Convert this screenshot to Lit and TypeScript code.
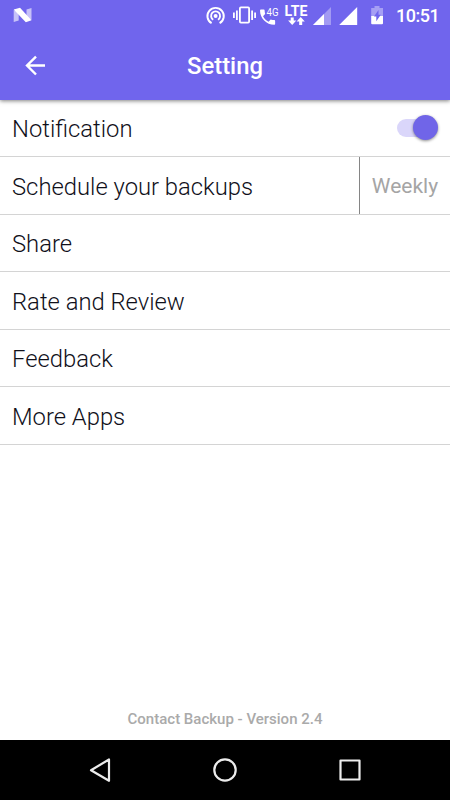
import { LitElement, html, css } from "lit";
import { customElement, property } from "lit/decorators.js";

@customElement("status-bar")
class StatusBar extends LitElement {
  static styles = css`
    :host { display: flex; height: 32px; color: #fff; font-family: Roboto, sans-serif; align-items: center; }
    svg { display: block; height: 32px; flex: none; fill: #fff; }
    .logo { margin-left: 12px; }
    .gap { flex: 1; }
    .time { width: 60px; box-sizing: border-box; padding-left: 6px; font-size: 18px; letter-spacing: -.5px; line-height: 32px; font-weight: 500; white-space: nowrap; }
    .four { font: 400 11.500px Roboto, sans-serif; }
    .lte { font: 700 14px Roboto, sans-serif; }
  `;
  render() {
    return html`
      <svg class="logo" width="22" viewBox="12 0 22 32">
        <path d="M13.700 10v12l5-1.500V12zM26.500 17.500V9.500l5-1.500v12z" opacity=".6"/>
        <path d="M13.700 9.500 20 7.700 31.500 20.200 25.800 22.300z"/>
      </svg>
      <div class="gap"></div>
      <svg width="26" viewBox="204 0 26 32">
        <g fill="none" stroke="#fff" stroke-width="1.9">
          <path d="M211.600 23.200a8.200 8.200 0 1 1 8 0"/>
          <path d="M213.200 19.700a4.500 4.500 0 1 1 4.800 0"/>
        </g>
        <circle cx="215.600" cy="16" r="2"/>
      </svg>
      <svg width="28" viewBox="230 0 28 32">
        <rect x="239.900" y="7.400" width="9.200" height="15.200" rx="1" fill="none" stroke="#fff" stroke-width="1.800"/>
        <path d="M233 12.500h1.800v5.500H233zM236 10.500h1.800v9.500H236zM251.200 10.500h1.800v9.500h-1.800zM254.200 12.500h1.800v5.500h-1.800z"/>
      </svg>
      <svg width="24" viewBox="258 0 24 32">
        <path transform="translate(257.500 7.100) scale(.84)" d="M20 15.500c-1.250 0-2.450-.2-3.570-.57-.35-.11-.74-.03-1.020.24l-2.200 2.200c-2.830-1.440-5.150-3.750-6.590-6.590l2.200-2.210c.28-.26.360-.65.250-1C8.700 6.450 8.500 5.250 8.500 4c0-.55-.45-1-1-1H4c-.55 0-1 .45-1 1 0 9.390 7.610 17 17 17 .55 0 1-.45 1-1v-3.500c0-.55-.45-1-1-1z"/>
        <text class="four" x="266.500" y="15.500" textLength="12" lengthAdjust="spacingAndGlyphs">4G</text>
      </svg>
      <svg width="28" viewBox="282 0 28 32">
        <text class="lte" x="284.600" y="16" textLength="22.800" lengthAdjust="spacingAndGlyphs">LTE</text>
        <path d="M290.700 17.500h3v3h2.600l-4.100 4.500-4.100-4.500h2.600zM299.200 25h3v-3.500h2.600l-4.100-4.500-4.100 4.500h2.600z"/>
      </svg>
      <svg width="24" viewBox="310 0 24 32">
        <path d="M331 7v18h-18z" opacity=".35"/>
        <path d="M324 14v11h-11z"/>
      </svg>
      <svg width="32" viewBox="334 0 32 32"><path d="M357.200 7v18h-18z"/></svg>
      <svg width="24" viewBox="366 0 24 32">
        <path d="M371.200 8h3.300V6h5v2h3.500v8.500h-11.800z" opacity=".38"/>
        <path d="M371.200 16h11.800v7.200q0 1-1 1h-9.800q-1 0-1-1z"/>
        <path d="M378.500 10v4.800h2.300l-4.500 6.500v-4.700h-2.300z" fill="#7065ed"/>
      </svg>
      <div class="time">10:51</div>`;
  }
}

@customElement("setting-row")
class SettingRow extends LitElement {
  @property() label = "";
  static styles = css`
    :host { display: flex; height: 57.5px; box-sizing: border-box; border-bottom: 1px solid #d4d4d4; padding-left: 12px; font-family: Roboto, sans-serif; }
    :host(:first-child) { height: 57px; }
    .label { flex: 1; font-size: 23.800px; line-height: 59px; font-weight: 300; color: #10101a; white-space: nowrap; }
    :host(:nth-child(even)) .label { line-height: 61px; }
  `;
  render() {
    return html`<div class="label">${this.label}</div><slot></slot>`;
  }
}

@customElement("app-root")
class AppRoot extends LitElement {
  static styles = css`
    :host { display: flex; flex-direction: column; height: 800px; background: #fff; font-family: Roboto, sans-serif; overflow: hidden; }
    .top { height: 100px; flex: none; background: #7065ed; box-shadow: 0 1px 4px rgba(0, 0, 0, .5); z-index: 1; }
    .bar { height: 68px; display: grid; grid-template-columns: 70px 1fr 70px; align-items: center; color: #fff; }
    .bar svg { display: block; margin-left: 20px; }
    .title { text-align: center; font-size: 23.800px; line-height: 69px; font-weight: 500; }
    .list { flex: 1; }
    .toggle { width: 41px; height: 26px; margin: 15px 12px 0 0; display: flex; align-items: center; }
    .track { width: 36px; height: 18px; border-radius: 9px; background: #dad6fa; }
    .knob { flex: none; width: 25px; height: 25px; border-radius: 50%; background: #7065e8; margin: 0 0 1px -20px; box-shadow: 0 1px 3px rgba(0, 0, 0, .45); }
    .period { width: 90px; border-left: 1px solid #858585; color: #a5a5a5; font-size: 21px; line-height: 59px; text-align: center; }
    .version { height: 43px; flex: none; line-height: 44px; text-align: center; color: #aaa; font-size: 15px; font-weight: 500; }
    .nav { height: 60px; flex: none; background: #000; display: flex; justify-content: space-between; align-items: center; padding: 0 85px; }
    .nav svg { display: block; fill: none; stroke: #ececec; stroke-width: 2.200; stroke-linejoin: round; }
  `;
  render() {
    return html`
      <header class="top">
        <status-bar></status-bar>
        <div class="bar">
          <svg width="28" height="28" viewBox="0 0 28 28" fill="none" stroke="#fff" stroke-width="2.400">
            <path d="M25 12.500H7M16 3.600 7 12.500l9 9"/>
          </svg>
          <div class="title">Setting</div>
        </div>
      </header>
      <main class="list">
        <setting-row label="Notification">
          <div class="toggle"><div class="track"></div><div class="knob"></div></div>
        </setting-row>
        <setting-row label="Schedule your backups"><div class="period">Weekly</div></setting-row>
        ${["Share", "Rate and Review", "Feedback", "More Apps"].map(
          (label) => html`<setting-row label=${label}></setting-row>`
        )}
      </main>
      <div class="version">Contact Backup - Version 2.4</div>
      <nav class="nav">
        <svg width="30" height="30" viewBox="0 0 30 30"><path d="M24 4.500v21.300L6 15.200z"/></svg>
        <svg width="30" height="30" viewBox="0 0 30 30"><circle cx="15" cy="15" r="10.700"/></svg>
        <svg width="30" height="30" viewBox="0 0 30 30"><rect x="5.500" y="5.500" width="19" height="19"/></svg>
      </nav>`;
  }
}
